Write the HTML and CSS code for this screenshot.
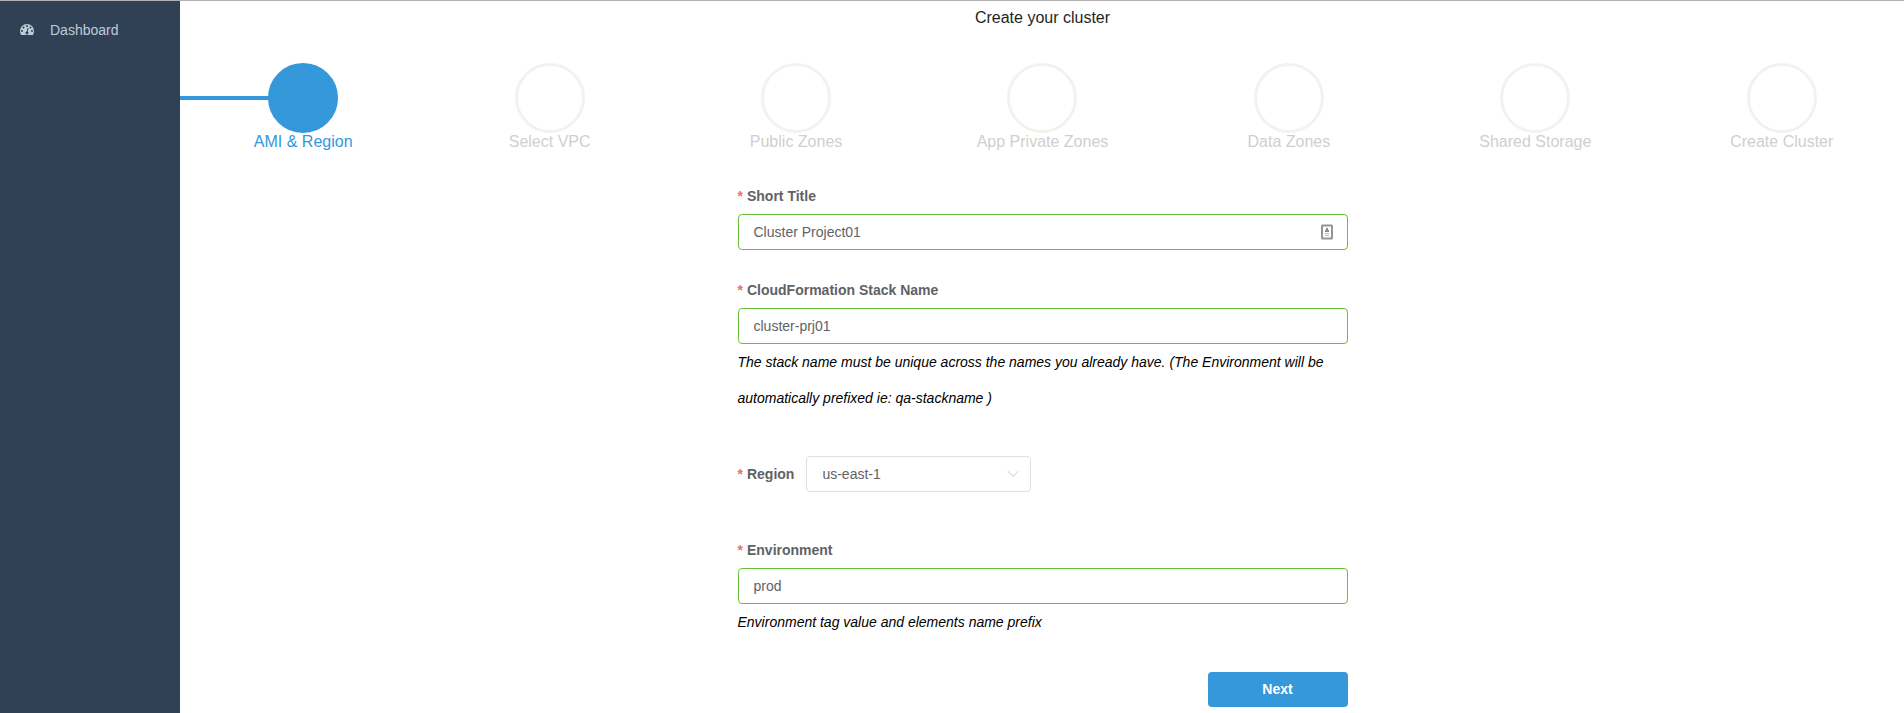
FILE: index.html
```html
<!DOCTYPE html>
<html lang="en">
<head>
<meta charset="utf-8">
<title>Create your cluster</title>
<link rel="stylesheet" href="styles.css">
</head>
<body>
<div class="app">
  <nav class="sidebar">
    <a class="menu-item">
      <svg class="menu-icon" width="14" height="12" viewBox="0 0 14 12"><path fill="#bfcbd9" fill-rule="evenodd" d="M7 0a7 7 0 0 1 7 7c0 1.500-.4 2.800-1 3.800-.1.200-.3.200-.5.200h-11c-.2 0-.4 0-.5-.2-.6-1-1-2.300-1-3.800a7 7 0 0 1 7-7zM2 6a1 1 0 1 0 0 2 1 1 0 0 0 0-2zM3.500 2.500a1 1 0 1 0 0 2 1 1 0 0 0 0-2zM7 1a1 1 0 1 0 0 2 1 1 0 0 0 0-2zM10.500 2.500a1 1 0 1 0 0 2 1 1 0 0 0 0-2zM12 6a1 1 0 1 0 0 2 1 1 0 0 0 0-2zM7.600 4l-.9 3.400a1.500 1.500 0 1 0 1 .2l.9-3.300z"/></svg>
      <span>Dashboard</span>
    </a>
  </nav>
  <main class="content">
    <h4 class="title">Create your cluster</h4>
    <ol class="steps">
      <li class="step active"><span class="circle"></span><span>AMI &amp; Region</span></li>
      <li class="step"><span class="circle"></span><span>Select VPC</span></li>
      <li class="step"><span class="circle"></span><span>Public Zones</span></li>
      <li class="step"><span class="circle"></span><span>App Private Zones</span></li>
      <li class="step"><span class="circle"></span><span>Data Zones</span></li>
      <li class="step"><span class="circle"></span><span>Shared Storage</span></li>
      <li class="step"><span class="circle"></span><span>Create Cluster</span></li>
    </ol>
    <form class="form">
      <div class="field">
        <label class="label">Short Title</label>
        <div class="input"><span>Cluster Project01</span>
          <svg width="12" height="16" viewBox="0 0 12 16"><rect x="1" y="1.500" width="10" height="13" rx=".5" fill="#fff" stroke="#949494" stroke-width="2"/><path d="M5 5.500V4h2v1.500l1 1V8H4V6.500z" fill="#8c8c8c"/><path d="M4 9.500h4M4 11.500h4" stroke="#b5b5b5"/></svg>
        </div>
      </div>
      <div class="field stack">
        <label class="label">CloudFormation Stack Name</label>
        <div class="input">cluster-prj01</div>
        <em class="hint">The stack name must be unique across the names you already have. (The Environment will be automatically prefixed ie: qa-stackname )</em>
      </div>
      <div class="field inline">
        <label class="label">Region</label>
        <div class="input select"><span>us-east-1</span>
          <svg width="12" height="8" viewBox="0 0 12 8"><path d="M.8 1.200 6 6.300l5.200-5.100" fill="none" stroke="#c0c4cc" stroke-width=".9"/></svg>
        </div>
      </div>
      <div class="field environment">
        <label class="label">Environment</label>
        <div class="input">prod</div>
        <em class="hint">Environment tag value and elements name prefix</em>
      </div>
      <button type="button" class="next">Next</button>
    </form>
  </main>
</div>
</body>
</html>
```
FILE: styles.css
```css
* { box-sizing: border-box; }
body {
  margin: 0;
  font-family: "Liberation Sans", Arial, sans-serif;
  font-size: 14px;
  color: #000;
  background: #fff;
}
.app {
  display: flex;
  height: 713px;
  overflow: hidden;
  border-top: 1px solid #b0b0b0;
}
.sidebar { flex: none; width: 180px; background: #304156; }
.menu-item {
  display: flex;
  align-items: center;
  gap: 16px;
  height: 58px;
  padding: 0 20px;
  color: #bfcbd9;
}
.menu-icon { margin-top: -1px; }
.content { flex: none; width: 1725px; }
.title {
  margin: 8px 0 0;
  font-size: 16px;
  font-weight: 400;
  line-height: 18px;
  text-align: center;
  color: #1f1f1f;
}
.steps {
  display: flex;
  margin: 36px 0 0;
  padding: 0;
  list-style: none;
}
.step {
  flex: 1;
  display: flex;
  flex-direction: column;
  align-items: center;
  font-size: 16px;
  line-height: 18px;
  color: #cfcfcf;
}
.circle {
  width: 70px;
  height: 70px;
  border: 3px solid #f3f2ee;
  border-radius: 50%;
}
.active {
  color: #3498db;
  background: linear-gradient(#3498db, #3498db) 0 33px / 50% 4px no-repeat;
}
.active .circle { background: #3498db; border-color: #3498db; }
.form {
  display: flex;
  flex-direction: column;
  width: 610px;
  margin: 27px auto 0;
}
.field { display: flex; flex-direction: column; margin-bottom: 22px; }
.label {
  line-height: 36px;
  font-weight: 700;
  color: #606266;
}
.label::before { content: "*"; margin-right: 4px; color: #f56c6c; font-weight: 700; }
.input {
  display: flex;
  align-items: center;
  justify-content: space-between;
  height: 36px;
  padding: 0 14px 0 15px;
  border: 1px solid #67c23a;
  border-radius: 4px;
  color: #606266;
}
.hint { line-height: 36px; }
.stack { margin-bottom: 40px; }
.inline { flex-direction: row; gap: 12px; margin-bottom: 40px; }
.select { width: 225px; padding: 0 11px 0 15px; border-color: #dcdfe6; }
.environment { margin-bottom: 32px; }
.next {
  align-self: flex-end;
  width: 140px;
  height: 35px;
  padding: 0 0 2px;
  border: 0;
  border-radius: 4px;
  background: #3498db;
  color: #fff;
  font: 700 14px "Liberation Sans", Arial, sans-serif;
}
```
